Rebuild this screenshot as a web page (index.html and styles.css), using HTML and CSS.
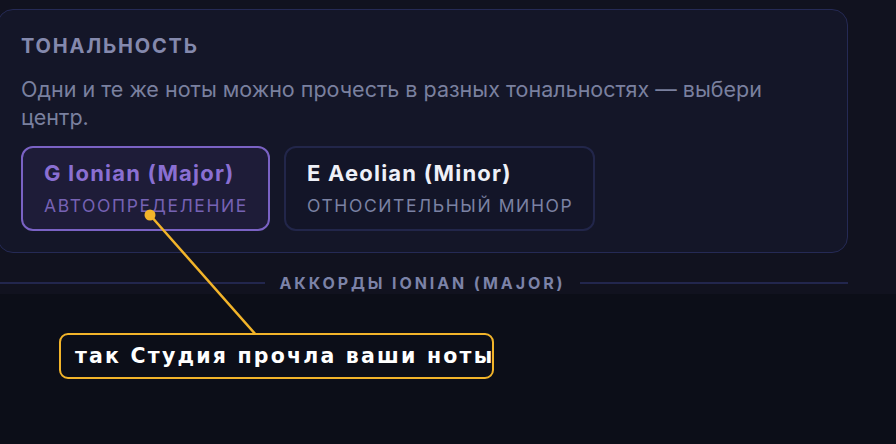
FILE: index.html
```html
<!DOCTYPE html>
<html lang="ru">
<head>
<meta charset="utf-8">
<link rel="stylesheet" href="styles.css">
</head>
<body>
<div class="panel">
  <section class="card">
    <h2 class="card-title">ТОНАЛЬНОСТЬ</h2>
    <p class="card-desc">Одни и те же ноты можно прочесть в разных тональностях — выбери центр.</p>
    <div class="keys">
      <button class="key key-active">
        <span class="key-name">G Ionian (Major)</span>
        <span class="key-sub">АВТООПРЕДЕЛЕНИЕ</span>
      </button>
      <button class="key">
        <span class="key-name">E Aeolian (Minor)</span>
        <span class="key-sub">ОТНОСИТЕЛЬНЫЙ МИНОР</span>
      </button>
    </div>
  </section>
  <div class="divider">
    <span class="divider-line"></span>
    <span class="divider-text">АККОРДЫ IONIAN (MAJOR)</span>
    <span class="divider-line"></span>
  </div>
</div>

<svg class="callout-line" width="896" height="444" viewBox="0 0 896 444">
  <line x1="150" y1="215" x2="257" y2="336" stroke="#f2b42a" stroke-width="2.5" stroke-linecap="round"/>
  <circle cx="150" cy="215" r="5.5" fill="#f2b42a"/>
</svg>
<div class="callout-label">так Студия прочла ваши ноты</div>
</body>
</html>
```

FILE: styles.css
```css
* { box-sizing: border-box; }

html, body {
  margin: 0;
  padding: 0;
}

body {
  background: #0c0e18;
  font-family: Inter, "Noto Sans", sans-serif;
  width: 896px;
  height: 444px;
  overflow: hidden;
  position: relative;
}

.panel {
  background: #11121f;
  height: 294px;
  overflow: hidden;
  padding: 9px 48px 0 0;
  margin-left: -3px;
}

.card {
  border: 1px solid #252a55;
  border-radius: 16px;
  background: #141628;
  padding: 24px 24px 21px 23px;
}

.card-title {
  margin: 0;
  font-size: 20px;
  line-height: 24px;
  font-weight: 700;
  letter-spacing: 1.8px;
  color: #8489ad;
}

.card-desc {
  margin: 17px 0 0 0;
  font-size: 21.5px;
  line-height: 28px;
  color: #7a809f;
}

.keys {
  display: flex;
  gap: 14px;
  margin-top: 15px;
}

.key {
  display: flex;
  flex-direction: column;
  align-items: flex-start;
  gap: 9px;
  padding: 12px 20px 12px 21px;
  border: 2px solid #22264a;
  border-radius: 12px;
  background: #131528;
  font-family: inherit;
  cursor: pointer;
  text-align: left;
}

.key-name {
  font-size: 22px;
  line-height: 26px;
  font-weight: 700;
  letter-spacing: 1.2px;
  color: #eef0f8;
}

.key-sub {
  font-size: 17.5px;
  line-height: 22px;
  letter-spacing: 1.6px;
  color: #7b82a3;
}

.key-active {
  border-color: #7a62c4;
  background: #1e1c38;
}

.key-active .key-name { color: #8a6fd2; }
.key-active .key-sub { color: #7662b4; }

.divider {
  display: flex;
  align-items: center;
  gap: 14px;
  margin-top: 20px;
}

.divider-line {
  flex: 1;
  height: 2px;
  background: #22264d;
}

.divider-text {
  font-size: 16px;
  line-height: 20px;
  font-weight: 700;
  letter-spacing: 2.9px;
  color: #7c83a8;
}

.callout-line {
  position: absolute;
  left: 0;
  top: 0;
  pointer-events: none;
}

.callout-label {
  position: absolute;
  left: 59px;
  top: 333px;
  width: 435px;
  height: 46px;
  border: 2px solid #f2b42a;
  border-radius: 9px;
  background: #0c0e18;
  color: #ffffff;
  font-family: "DejaVu Sans", sans-serif;
  font-weight: 700;
  font-size: 20.5px;
  line-height: 42px;
  letter-spacing: 2.2px;
  padding-left: 14px;
  white-space: nowrap;
}
```
